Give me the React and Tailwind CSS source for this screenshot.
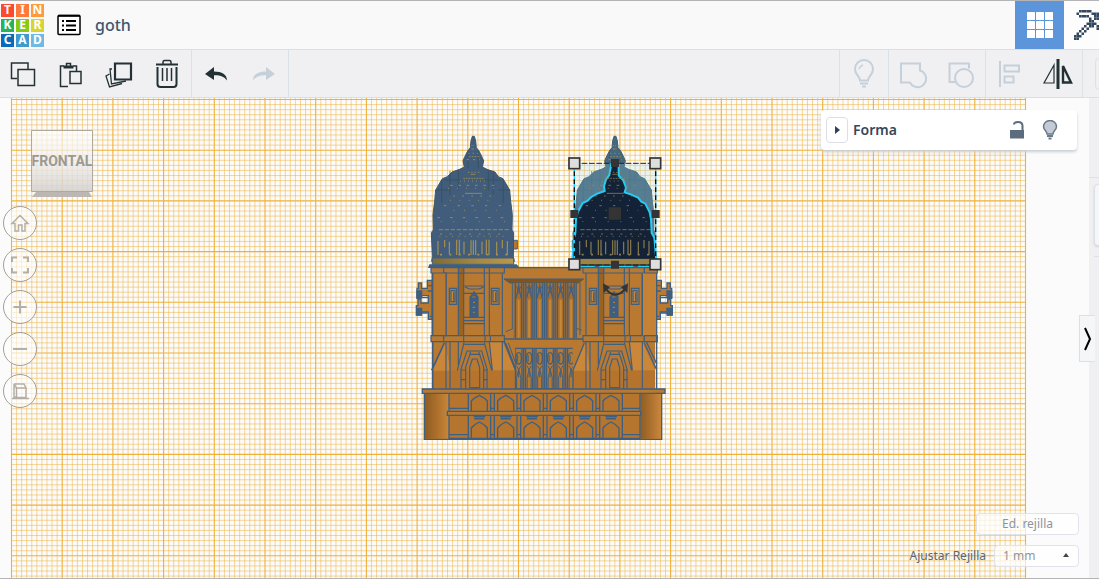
import React from 'react';
import clsx from 'clsx';

const LINE = '#3f5f80';

const LOGO = [
  ['T', 'bg-[#fb4a2d]'], ['I', 'bg-[#ff7a38]'], ['N', 'bg-[#ff9c3a]'],
  ['K', 'bg-[#27b35c]'], ['E', 'bg-[#8cc914]'], ['R', 'bg-[#d9d52c]'],
  ['C', 'bg-[#0a6cb8]'], ['A', 'bg-[#419acb]'], ['D', 'bg-[#71b9e2]'],
];

const PICKAXE = [
  '..XXXXX.....',
  '.X.....XXX..',
  '..XXXX..XXX.',
  '......X.XXX.',
  '......XX....',
  '.....XXXX...',
  '....X.XX.XXX',
  '...X.X...XXX',
  '..X.X.....XX',
  '.X.X......XX',
  'XXX.......XX',
  'XX..........',
];

const range = (n) => Array.from({ length: n }, (_, i) => i);

const Icon = ({ w = 30, h = 30, className, children }) => (
  <svg width={w} height={h} viewBox={`0 0 ${w} ${h}`} fill="none" stroke="currentColor" strokeWidth="1.5" className={clsx('shrink-0', className)} aria-hidden="true">
    {children}
  </svg>
);

const icons = {
  copy: <><path d="M9 19.500H3.500V4H20v6" /><path d="M10 10.500h16.500v16H10z" /></>,
  paste: <><path d="M12 27.500H4.500V7H8m9 0h3.500v5" /><path d="M7.500 6.500h10v3h-10z" fill="currentColor" stroke="none" /><path d="M10.500 7V4.500h4V7" /><path d="M14 12.500h11v12H14z" fill="#f0f0f2" /></>,
  duplicate: <><path d="M5.500 15 2 17l3.500 11L18 24.500" strokeWidth="1.300" /><path d="M8 10H6l1.500 15L22 22" strokeWidth="1.300" /><path d="M11 4.500h16v16H11z" strokeWidth="2.200" fill="#f0f0f2" /></>,
  trash: <><path d="M4 5.500h22" strokeWidth="2" /><path d="M11 5V3q0-1.500 1.500-1.500h5Q19 1.500 19 3v2" /><path d="M5.500 8v17q0 3 3 3h13q3 0 3-3V8" strokeWidth="2" /><path d="M10.500 9v13M15 9v13M19.500 9v13" /></>,
  undo: <path d="M4 15l9-7v4.500c8 0 13 3 13 9-3-4-7-5.500-13-5.200V21z" fill="currentColor" stroke="none" />,
  redo: <path d="M26 15l-9-7v4.500c-8 0-13 3-13 9 3-4 7-5.500 13-5.200V21z" fill="currentColor" stroke="none" />,
  bulb: <><path d="M11 21.500c0-4-5-5.500-5-11.500a9 9 0 0 1 18 0c0 6-5 7.500-5 11.500z" strokeWidth="2" /><path d="M10 10q1-3 4-4" /><path d="M11 24.500h8M13 27.500h4" strokeWidth="2" /></>,
  group: <path d="M3 4.500h19v7a8.500 8.500 0 1 1-10 12H3z" strokeWidth="2" />,
  ungroup: <><path d="M10 23H3.500V4.500H23v5" strokeWidth="2" /><circle cx="18" cy="19" r="9" strokeWidth="2" /></>,
  align: <><path d="M5 2v26" strokeWidth="2" /><path d="M9.500 6.500h14.500v6H9.500zM9.500 17.500h9v6h-9z" strokeWidth="2" /></>,
  mirror: <><path d="M15 0v30" strokeWidth="3" /><path d="M11 6v18H1z" strokeWidth="1.200" /><path d="M20 7v16.500h8z" strokeWidth="2.400" /></>,
};

const ToolButton = ({ name, label, disabled }) => (
  <button
    type="button"
    aria-label={label}
    disabled={disabled}
    className={clsx('flex h-full w-12 shrink-0 items-center justify-center', disabled ? 'text-[#c5d0da]' : 'text-[#233135]')}
  >
    <Icon>{icons[name]}</Icon>
  </button>
);

const Header = () => (
  <header className="flex h-[49px] shrink-0 items-center overflow-hidden border-t border-t-[#b4b4b6] bg-[#f9f9f9]">
    <a href="#home" aria-label="Tinkercad" className="ml-px grid grid-cols-3 gap-0.5">
      {LOGO.map(([letter, color]) => (
        <span key={letter} className={clsx('flex size-[13px] items-center justify-center text-xs leading-none font-bold text-white', color)}>{letter}</span>
      ))}
    </a>
    <button type="button" aria-label="Diseños" className="ml-[13px] text-black">
      <Icon w={24} h={22}>
        <rect x="1" y="1.500" width="22" height="19" rx="1" fill="#fff" strokeWidth="1.500" />
        <path d="M1 1.800h22" strokeWidth="2" />
        <path d="M5 7h2M5 11.500h2M5 16h2M9 7h10M9 11.500h10M9 16h10" strokeWidth="2" />
      </Icon>
    </button>
    <h1 className="ml-3.5 text-base font-medium text-[#41566e]">goth</h1>
    <div className="ml-auto flex h-full">
      <button type="button" aria-label="Vista 3D" className="flex w-[49px] items-center justify-center bg-[#5c95d9] text-white">
        <svg width="26" height="26" viewBox="0 0 26 26" fill="currentColor" aria-hidden="true">
          {range(9).map((i) => <rect key={i} x={(i % 3) * 9} y={Math.floor(i / 3) * 9} width="8" height="8" rx="0.500" />)}
        </svg>
      </button>
      <button type="button" aria-label="Bloques" className="flex w-[35px] items-center overflow-hidden bg-[#fdfdfd] pl-2.5">
        <svg width="30" height="30" viewBox="0 0 12 12" className="shrink-0" fill="#33485e" aria-hidden="true">
          {PICKAXE.map((row, y) => [...row].map((c, x) => c === 'X' && <rect key={`${x}-${y}`} x={x} y={y} width="1" height="1" />))}
        </svg>
      </button>
    </div>
  </header>
);

const Toolbar = () => (
  <nav aria-label="Herramientas" className="flex h-[49px] shrink-0 overflow-hidden border-t border-b border-[#d9dfe7] bg-[#f0f0f2]">
    <div className="-ml-px flex border-r border-[#dce1e8]">
      <ToolButton name="copy" label="Copiar" />
      <ToolButton name="paste" label="Pegar" />
      <ToolButton name="duplicate" label="Duplicar" />
      <ToolButton name="trash" label="Suprimir" />
    </div>
    <div className="flex border-r border-[#dce1e8]">
      <ToolButton name="undo" label="Deshacer" />
      <ToolButton name="redo" label="Rehacer" disabled />
    </div>
    <div className="ml-auto flex border-l border-[#dce1e8]">
      <ToolButton name="bulb" label="Mostrar todo" disabled />
    </div>
    <div className="flex border-l border-[#dce1e8]">
      <ToolButton name="group" label="Agrupar" disabled />
      <ToolButton name="ungroup" label="Desagrupar" disabled />
    </div>
    <div className="flex border-l border-[#dce1e8]">
      <ToolButton name="align" label="Alinear" disabled />
      <ToolButton name="mirror" label="Simetría" />
    </div>
    <div className="flex w-[17px] items-center overflow-hidden border-l border-[#dce1e8] pl-3">
      <button type="button" aria-label="Importar" className="h-8 w-20 shrink-0 rounded border border-[#dce1e8]" />
    </div>
  </nav>
);

const Grid = () => (
  <g stroke="#f0b138">
    {range(201).map((i) => (
      <path key={`v${i}`} d={`M${11.5 + i * 5.07} 98V600`} strokeOpacity={i % 10 ? 0.5 : 1} strokeWidth={i % 10 ? 1 : 1.1} />
    ))}
    {range(96).map((i) => (
      <path key={`h${i}`} d={`M11 ${99.5 + i * 5.07}H1026`} strokeOpacity={i % 10 ? 0.5 : 1} strokeWidth={i % 10 ? 1 : 1.1} />
    ))}
  </g>
);

// shape detail is drawn at three units to the pixel
const Tower = () => (
  <g stroke={LINE} strokeWidth="3.500" fill="#b97930">
    <path d="M118 38H294V260H118z" stroke="none" />
    <path d="M83 260H330V402H83z" stroke="none" />
    <path d="M160 54h16v188h-16z" fill="#9c6220" />
    <path d="M123 54V242M238 54V242M253 54V242M292 54V242" />
    <path d="M176 93h62v113h-62z" />
    <path d="M180 96l14 6h28l14-6M176 115h62M176 187h62M176 197h62" fill="none" />
    <path d="M195 126l12-16 12 16v58h-24z" fill={LINE} />
    <path d="M202 126h9M204 142h6M203 157h7M204 172h5" stroke="#b97930" />
    <path d="M133 100h22v48h-22zM259 100h23v48h-23z" />
    <path d="M138 107h12v33h-12zM264 107h12v33h-12z" fill="#c6893b" />
    <path d="M146 112v25M272 112v25" />
    <path d="M120 262l16 84V402H83V346z" fill="#cb8739" stroke="none" />
    <path d="M253 262h40l37 84H262z" fill="#cb8739" stroke="none" />
    <path d="M83 347h247v55H83z" fill="#b5732c" stroke="none" />
    <path d="M123 260V402M135 260V402M292 260V402M160 260V330M177 262L157 347M238 262L260 347M253 260l9 86" fill="none" />
    <path d="M178 268h60M168 402v-60l18-54h44l16 54v60M182 402v-66l13-38h29l12 38v66M194 398v-60l8-26h14l8 26v60z" fill="none" />
    <path d="M168 345h14M236 345h12M168 374h14M236 374h12M196 290v10M222 290v10" />
    <path d="M114 242H298v18H114zM176 242v18M240 242v18M256 242v18" />
    <path d="M114 38H298v16H114zM176 38v16M238 38v16M253 38v16" />
    <path d="M160 38h16v16h-16z" fill="#9c6220" />
  </g>
);

const Bracket = () => (
  <g fill="#b97930" stroke={LINE} strokeWidth="4">
    <path d="M82 76H67v24H50V84H40v16h-4v30h12v-8h22v22H48v-12h-9v20h-5v28h14v-9h22v22h12z" />
    <path d="M36 108h14v20H36zM36 160h14v20H36z" fill={LINE} />
    <path d="M68 108h14M50 128h20M70 92h12M50 174h18M74 184h10v44" fill="none" />
  </g>
);

const Building = () => (
  <g>
    <Bracket />
    <g transform="translate(836 0) scale(-1 1)"><Bracket /></g>
    <path d="M285 38h262v364H285z" fill="#b97930" stroke={LINE} strokeWidth="4" />
    <path d="M297 72h239l-16 12H314z" fill="#84531a" stroke={LINE} strokeWidth="3" />
    <path d="M325 84h190v166H325z" fill="#a96d2c" />
    {range(6).map((i) => (
      <g key={i} transform={`translate(${i * 31.5} 0)`} fill="none" stroke={LINE} strokeWidth="4">
        <path d="M331 84V250M350 84V250M356 84V250" />
        <path d="M334 130l7-40 7 40M334 94l14 28M348 94l-14 28M341 84v18" strokeWidth="3" />
        <path d="M341 134v114" stroke="#c6893b" strokeWidth="6" />
        <path d="M330 282V400M351 282V400M356 282V400" />
        <ellipse cx="341" cy="310" rx="8" ry="17" />
        <path d="M338 300v20M334 372l7-30 7 30M334 332l7 12 7-12M335 372v28M347 372v28M341 348v20" strokeWidth="3" />
      </g>
    ))}
    <path d="M298 252h240v28H298z" fill="#b97930" stroke={LINE} strokeWidth="4" />
    <path d="M322 82v140l-20 8M525 82v158M515 220l15 6" fill="none" stroke={LINE} strokeWidth="3" />
    <Tower />
    <g fill="#b97930" stroke={LINE} strokeWidth="3.500">
      <path d="M83 54h40v188H83zM78 38h38v16H78zM78 242h38v18H78z" />
    </g>
    <path d="M82 54V242M83 260V402M118 264L80 346M298 260l34 86v56" fill="none" stroke={LINE} strokeWidth="5" />
    <path d="M302 264l30 76M310 264l24 66" fill="none" stroke={LINE} strokeWidth="3" />
    <g transform="translate(420 0)">
      <Tower />
      <path d="M292 54h43v188h-43z" fill="#c38235" />
      <path d="M298 38h39v16h-39zM298 242h39v18h-39z" fill="#b97930" stroke={LINE} strokeWidth="3.500" />
      <path d="M335 54V402M292 54V242M298 264l37 80M304 260l31 66M118 264L84 346v56" fill="none" stroke={LINE} strokeWidth="4" />
    </g>
    <path d="M58 415h712v138H58z" fill="#b5752e" stroke={LINE} strokeWidth="4" />
    <path d="M60 417h72v134H60z" fill="url(#leftRound)" />
    <path d="M707 417h61v134h-61z" fill="url(#rightRound)" />
    <g fill="none" stroke={LINE} strokeWidth="4">
      <path d="M132 415V553M190 415V553M652 415V553M705 415V553M132 460h58M652 460h53M132 539h58M652 539h53M132 550h573" />
      {range(6).map((i) => (
        <g key={i} transform={`translate(${i * 79} 0)`}>
          <path d="M199 468v-30q7-9 24-17 17 8 24 17v30" />
          <path d="M199 551v-32q7-10 24-18 17 8 24 18v32" />
          <path d="M206 484h35M208 491h30" strokeWidth="5" />
          {i < 5 && <path d="M257 415V553M268 415V553M257 460h11M257 539h11" />}
        </g>
      ))}
      <path d="M127 469h580v12H127z" fill="#b97930" />
      <path d="M52 402h728v13H52z" fill="#b97930" />
    </g>
  </g>
);

const DOME = 'M217 34h6l4 14 2 20 8 10 10 20 4 10-4 18 14 7 24 8 10 14 14 6 20 34 3 34 5 40-1 46 5 8-1 72 3 14H95l2-14-3-72 6-8-1-46 5-40 3-34 20-34 15-6 14-14 23-8 14-7-4-18 4-10 10-20 8-10 2-20z';
const INNER = 'M214 118h22v34l14 14 8 22-4 14 20 7 20 9 10 12 12 6 13 26 4 20 2 42 8 14 6 68H97l5-68 4-14 2-42 6-22 14-26 14-6 12-12 18-10 22-8-2-14 6-20 10-14z';

// rows of [y, x start, x end, dash pattern]
const SPECKS = [
  [62, 214, 226, '3 3'], [72, 214, 226, '8 3'], [85, 205, 238, '4 9'], [95, 206, 238, '5 4'],
  [104, 200, 240, '7 12'], [142, 204, 240, '4 6'], [148, 212, 228, '14 3'], [160, 190, 250, '5 3'],
  [168, 180, 262, '3 9'], [181, 150, 300, '8 17'], [190, 144, 290, '3 24'], [205, 195, 246, '51 1'],
  [213, 160, 275, '5 22'], [226, 150, 290, '3 25'], [242, 132, 312, '7 34'], [256, 160, 290, '3 29'],
  [278, 112, 322, '8 30'], [290, 122, 320, '3 35'], [314, 116, 328, '13 5'], [327, 120, 320, '6 23'],
  [334, 118, 322, '3 16'],
];

const Specks = ({ color }) => (
  <g fill="none" stroke={color}>
    {SPECKS.map(([y, a, b, dash]) => <path key={y} d={`M${a} ${y}H${b}`} strokeDasharray={dash} strokeWidth="2.500" />)}
    <path d="M114 348v42M134 345v22M148 350v38M170 344v46M178 344v46M192 350v38M213 346v44M220 346v44M227 346v44M246 350v38M259 344v46M267 344v46M290 350v38M307 345v25M322 348v42" strokeWidth="3.500" />
    <path d="M120 389h202" strokeDasharray="6 22" strokeWidth="5" />
  </g>
);

// dark patches where the far side of the dome shows the grid
const Ribs = ({ color }) => (
  <path d="M150 138v70M175 134v60M204 80v50M235 80v50M265 136v60M280 140v70M310 165v70M125 165v70M110 195h35M296 195h34M135 165h50M255 165h45" stroke={color} strokeWidth="3" opacity="0.700" />
);

const Handle = ({ x, y }) => <rect x={x - 16} y={y - 16} width="32" height="32" fill="#dedede" stroke="#343434" strokeWidth="5" />;

const Selection = () => (
  <g transform="translate(405 -390)">
    <path d="M103 115h244v305H103z" fill="#9fd9e8" fillOpacity="0.200" />
    <path d={INNER} fill="#132237" stroke="#26cdf3" strokeWidth="6" />
    <g transform="translate(5 0)"><Specks color="#8c7d50" /></g>
    <path d="M106 400h240v20H106z" fill="#9c8346" stroke="#132237" strokeWidth="3" />
    <path d="M120 424h210" stroke="#26cdf3" strokeWidth="4" strokeDasharray="44 14" />
    <path d="M103 115h244M103 420h244" stroke="#222" strokeWidth="3" strokeDasharray="17 5" />
    <path d="M103 115v305M347 115v305" stroke="#26cdf3" strokeWidth="4" />
    <path d="M103 115v305M347 115v305" stroke="#111" strokeWidth="4" strokeDasharray="14 10" />
    <path d="M213 102h24v24h-24zM91 255h24v24H91zM335 255h24v24h-24zM213 407h24v24h-24zM206 247h37v37h-37z" fill="#343434" />
    <Handle x={103} y={115} />
    <Handle x={346} y={115} />
    <Handle x={103} y={418} />
    <Handle x={346} y={418} />
    <path d="M196 490q30 38 61 0" fill="none" stroke="#343434" strokeWidth="6" />
    <path d="M189 475l21 12-19 17zM264 475l-21 12 19 17z" fill="#343434" />
  </g>
);

const Scene = () => (
  <svg className="absolute inset-0 size-full" role="img" aria-label="Plano de trabajo">
    <defs>
      <linearGradient id="leftRound"><stop stopColor="#8f5c20" /><stop offset="0.500" stopColor="#ad702c" /><stop offset="1" stopColor="#c98739" /></linearGradient>
      <linearGradient id="rightRound"><stop stopColor="#8f5d22" /><stop offset="0.500" stopColor="#ad7130" /><stop offset="1" stopColor="#ca873b" /></linearGradient>
      <linearGradient id="band"><stop stopColor="#806c35" /><stop offset="0.600" stopColor="#a98a42" /><stop offset="1" stopColor="#bb9748" /></linearGradient>
      <linearGradient id="cube" x2="0" y2="1"><stop stopColor="#fff" stopOpacity="0.650" /><stop offset="0.500" stopColor="#eee" stopOpacity="0.750" /><stop offset="1" stopColor="#d2d0ce" stopOpacity="0.850" /></linearGradient>
    </defs>
    <g transform="translate(0 -98)">
      <Grid />
      <g transform="translate(405 255) scale(0.33333)">
        <Building />
        <g transform="translate(-15 -390)">
          <path d="M338 346h14v26h-14z" fill="#bd7430" stroke={LINE} strokeWidth="3" />
          <path d={DOME} fill="#415d7b" stroke="#3b566d" strokeWidth="3" />
          <Ribs color="#334f5c" />
          <Specks color="#a69150" />
          <path d="M88 418h262l10 11H84z" fill={LINE} />
          <path d="M97 399h244v19H97z" fill="url(#band)" stroke={LINE} strokeWidth="3" />
        </g>
        <g transform="translate(410 -390)">
          <path d="M92 346h12v26H92z" fill="#a77746" stroke={LINE} strokeWidth="3" />
          <path d={DOME} fill="#45677f" stroke="#3d5f75" strokeWidth="3" />
          <Ribs color="#38606c" />
          <Specks color="#8b8350" />
          <path d="M92 418h258v11H92z" fill={LINE} />
        </g>
        <Selection />
      </g>
    </g>
  </svg>
);

const VIEW_BUTTONS = [
  ['Vista de inicio', <path key="home" d="M3 11.500 11 3.500l8 8h-3V19h-3v-6H9.500v6H6v-7.500z" />],
  ['Ajustar vista', <path key="fit" d="M3 8V3.500h5M14 3.500h5V8M19 14v4.500h-5M8 18.500H3V14" strokeWidth="2" />],
  ['Acercar', <path key="in" d="M11 4.500v13M4.500 11h13" strokeWidth="2" />],
  ['Alejar', <path key="out" d="M4 11h14" strokeWidth="2" />],
  ['Vista ortogonal', <path key="ortho" d="M5 4h10l2 4v9.500H7.500V8H17M5 4v13h2.500M5 4l2.500 4M3 18.500h17" strokeWidth="1.500" />],
];

const ViewControls = () => (
  <div className="absolute top-8 left-[3px] text-[#a29e98]">
    <button type="button" className="relative ml-7 flex h-[68px] w-[62px] justify-center font-['Roboto','Noto_Sans',sans-serif] text-sm leading-[62px] font-bold text-[#9d9992]">
      <svg width="62" height="68" className="absolute inset-0" aria-hidden="true">
        <path d="M5 62h53l3 5H1z" fill="#bcb7b2" />
        <path d="M0.500 0.500h61v61h-61z" fill="url(#cube)" stroke="#b1aa9c" />
      </svg>
      <span className="relative">FRONTAL</span>
    </button>
    <div className="mt-2 flex flex-col gap-2">
      {VIEW_BUTTONS.map(([label, shape]) => (
        <button key={label} type="button" aria-label={label} className="flex size-[34px] items-center justify-center rounded-full border border-[#a29e98] bg-white/60">
          <Icon w={22} h={22} className="opacity-80">{shape}</Icon>
        </button>
      ))}
    </div>
  </div>
);

const ShapePanel = () => (
  <section className="absolute top-3 right-3 flex h-10 w-64 items-center rounded-sm bg-white px-[5px] text-[#5b6c7e] shadow-[0_2px_3px_#c9ced8]">
    <button type="button" aria-label="Contraer" className="flex h-[26px] w-[22px] items-center justify-center rounded border border-[#dcdfe8]">
      <svg width="6" height="8" fill="#2f4257" aria-hidden="true"><path d="M1 0l5 4-5 4z" /></svg>
    </button>
    <h2 className="ml-[5px] text-sm font-semibold text-[#33475d]">Forma</h2>
    <button type="button" aria-label="Bloquear" className="ml-auto">
      <svg width="14" height="20" fill="none" aria-hidden="true">
        <path d="M0 10h14v8.500H0z" fill="currentColor" />
        <path d="M4 4.500Q4 2 8 2q4.500 0 4.500 4v5" stroke="currentColor" strokeWidth="2" />
      </svg>
    </button>
    <button type="button" aria-label="Ocultar" className="mr-3.5 ml-[18px]">
      <svg width="16" height="20" fill="none" stroke="#6a7a89" strokeWidth="1.500" aria-hidden="true">
        <path d="M5 14c0-3-3.500-4-3.500-7.500a6.500 6 0 0 1 13 0C14.500 10 11 11 11 14z" fill="#c5cbd6" />
        <path d="M5 16h6M6.500 18.500h3" strokeWidth="2" />
      </svg>
    </button>
  </section>
);

const GridSettings = () => (
  <div className="absolute right-2.5 bottom-[11px] flex flex-col items-end gap-2.5 text-xs text-[#8f969c]">
    <button type="button" className="h-[22px] w-[103px] rounded-sm border border-[#e2e3ea] bg-white/70 text-[#8b949e]">Ed. rejilla</button>
    <div className="flex items-center gap-2">
      <label htmlFor="snap" className="text-xs text-[#5d6871]">Ajustar Rejilla</label>
      <div className="relative">
        <select id="snap" defaultValue="1" className="block h-[22px] w-[85px] appearance-none rounded-sm border border-[#e2e3ea] bg-white/70 pl-2">
          <option value="1">1 mm</option>
        </select>
        <svg width="6" height="4" className="pointer-events-none absolute top-2 right-2.5" fill="#444" aria-hidden="true"><path d="M3 0l3 4H0z" /></svg>
      </div>
    </div>
  </div>
);

const SidePanel = () => (
  <aside className="relative w-2.5 shrink-0 bg-[#f0f0f2]">
    <div className="h-20 border-b border-[#dce1e8]" />
    <div className="overflow-hidden py-1.5 pl-[5px]">
      <div className="h-[62px] w-20 rounded border border-[#dce1e8] bg-[#f5f6f8] shadow-sm" />
    </div>
    <div className="ml-[5px] mt-1 h-px bg-[#dce1e8]" />
    <button type="button" aria-label="Ocultar panel" className="absolute top-[217px] right-1 flex h-[47px] w-4 items-center justify-center border border-r-0 border-[#dce1e8] bg-[#f5f6f8]">
      <svg width="8" height="24" fill="none" stroke="#000" strokeWidth="2" aria-hidden="true"><path d="M1 1l5 11-5 11" /></svg>
    </button>
  </aside>
);

const App = () => (
  <div className="flex h-screen flex-col overflow-hidden border-b border-[#b4b4b6] font-['Noto_Sans','Open_Sans',sans-serif]">
    <Header />
    <Toolbar />
    <div className="flex min-h-0 flex-1">
      <main className="relative min-w-0 flex-1 overflow-hidden bg-[#fbfbfb]">
        <Scene />
        <ViewControls />
        <ShapePanel />
        <GridSettings />
      </main>
      <SidePanel />
    </div>
  </div>
);

export default App;
